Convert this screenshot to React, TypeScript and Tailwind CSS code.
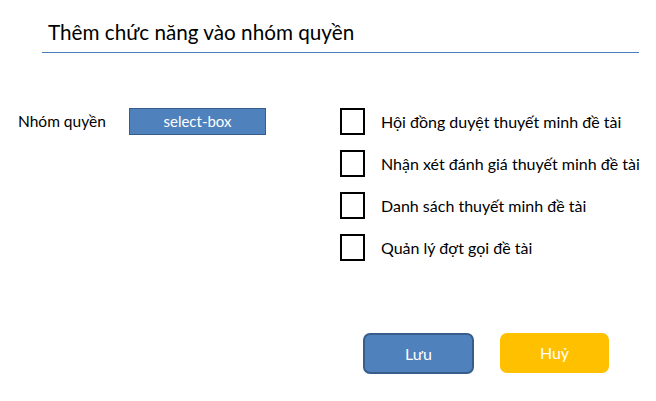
const items = [
  "Hội đồng duyệt thuyết minh đề tài",
  "Nhận xét đánh giá thuyết minh đề tài",
  "Danh sách thuyết minh đề tài",
  "Quản lý đợt gọi đề tài",
];

const App = () => {
  return (
    <div className="w-[656px] h-[401px] bg-white text-black font-['Lato','Noto_Sans',sans-serif]">
      <div className="pt-[20px] pl-[48px] text-[20.7px] leading-[24px] h-[52px]">
        Thêm chức năng vào nhóm quyền
      </div>
      <div className="ml-[42px] mr-[17px] h-[1px] bg-[#4a7ebb]" />

      <div className="flex pt-[55px]">
        <div className="flex items-center h-[27px] pl-[18px]">
          <span className="w-[111px] text-[15.5px]">Nhóm quyền</span>
          <div className="w-[137px] h-[27px] bg-[#4f81bd] border border-[#385d8a] text-white text-[15px] flex items-center justify-center">
            select-box
          </div>
        </div>

        <ul className="ml-[74px] flex flex-col gap-[15px]">
          {items.map((label) => (
            <li key={label} className="flex items-center h-[27px]">
              <span className="w-[25px] h-[27px] border-2 border-black" />
              <span className="ml-[16px] text-[16px]">{label}</span>
            </li>
          ))}
        </ul>
      </div>

      <div className="flex pl-[363px] pt-[72px] gap-[26px]">
        <button className="w-[111px] h-[41px] rounded-[7px] bg-[#4f81bd] border-2 border-[#385d8a] text-white text-[16px]">
          Lưu
        </button>
        <button className="w-[109px] h-[40px] rounded-[7px] bg-[#ffc000] text-white text-[16px]">
          Huỷ
        </button>
      </div>
    </div>
  );
};

export default App;
